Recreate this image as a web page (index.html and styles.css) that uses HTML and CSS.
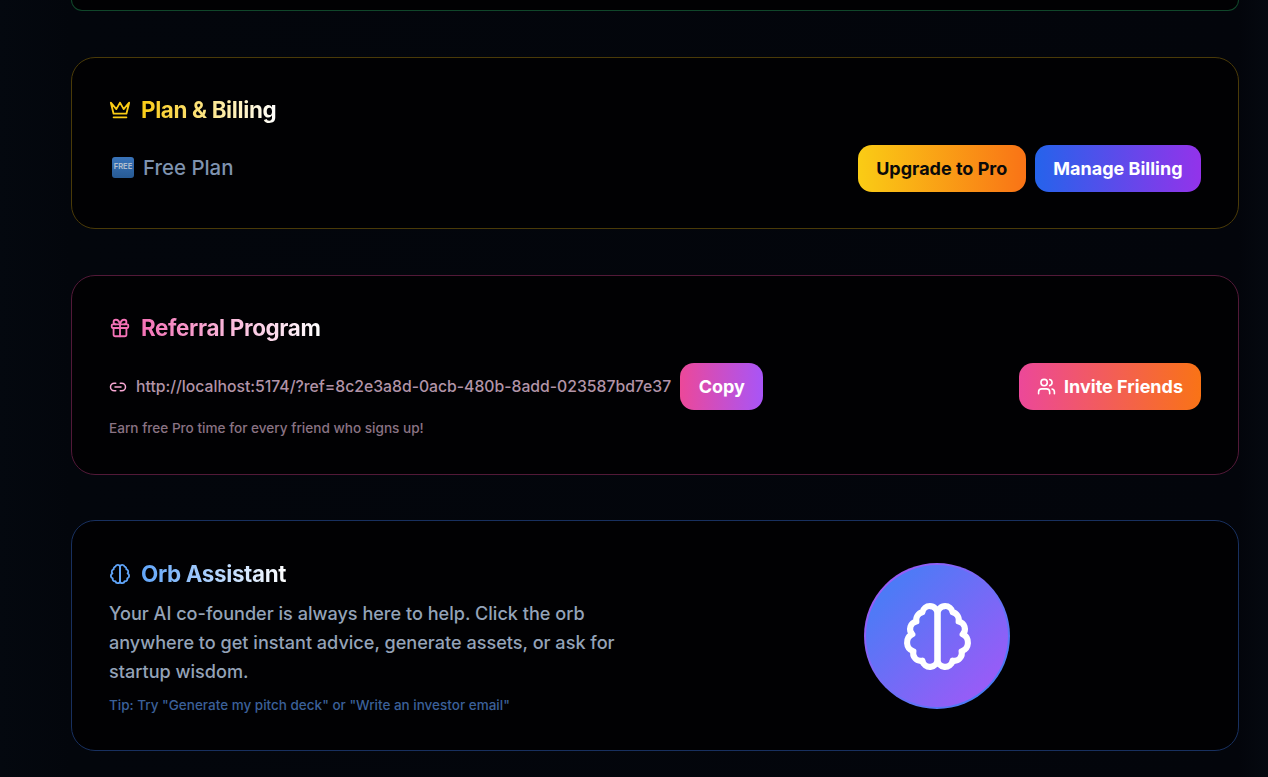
FILE: index.html
```html
<!DOCTYPE html>
<html lang="en">
<head>
<meta charset="utf-8">
<title>Settings</title>
<link rel="stylesheet" href="styles.css">
</head>
<body>
<main class="page">
  <div class="card-stub"></div>

  <section class="card card-plan">
    <h2 class="title">
      <svg class="icon icon-title stroke-yellow" viewBox="0 0 24 24"><path d="m2 4 3 12h14l3-12-6 7-4-7-4 7-6-7zm3 16h14"/></svg>
      <span class="grad grad-yellow">Plan &amp; Billing</span>
    </h2>
    <div class="row">
      <div class="plan-name"><span class="free-badge"><span class="free-text">FREE</span></span><span>Free Plan</span></div>
      <div class="btn-group">
        <button class="btn btn-upgrade">Upgrade to Pro</button>
        <button class="btn btn-manage">Manage Billing</button>
      </div>
    </div>
  </section>

  <section class="card card-ref">
    <h2 class="title">
      <svg class="icon icon-title stroke-pink" viewBox="0 0 24 24"><rect x="3" y="8" width="18" height="4" rx="1"/><path d="M12 8v13"/><path d="M19 12v7a2 2 0 0 1-2 2H7a2 2 0 0 1-2-2v-7"/><path d="M7.5 8a2.5 2.5 0 0 1 0-5A4.8 8 0 0 1 12 8a4.8 8 0 0 1 4.5-5 2.5 2.5 0 0 1 0 5"/></svg>
      <span class="grad grad-pink">Referral Program</span>
    </h2>
    <div class="row">
      <div class="ref-link">
        <svg class="icon icon-link" viewBox="0 0 24 24"><path d="M9 17H7A5 5 0 0 1 7 7h2"/><path d="M15 7h2a5 5 0 1 1 0 10h-2"/><line x1="8" y1="12" x2="16" y2="12"/></svg>
        <span class="ref-url">http://localhost:5174/?ref=8c2e3a8d-0acb-480b-8add-023587bd7e37</span>
        <button class="btn btn-copy">Copy</button>
      </div>
      <button class="btn btn-invite">
        <svg class="icon icon-users" viewBox="0 0 24 24"><path d="M16 21v-2a4 4 0 0 0-4-4H6a4 4 0 0 0-4 4v2"/><circle cx="9" cy="7" r="4"/><path d="M22 21v-2a4 4 0 0 0-3-3.87"/><path d="M16 3.13a4 4 0 0 1 0 7.75"/></svg>
        Invite Friends
      </button>
    </div>
    <p class="hint">Earn free Pro time for every friend who signs up!</p>
  </section>

  <section class="card card-orb">
    <div class="orb-grid">
      <div>
        <h2 class="title title-orb">
          <svg class="icon icon-title stroke-blue" viewBox="0 0 24 24"><path d="M9.5 2A2.5 2.5 0 0 1 12 4.5v15a2.5 2.5 0 0 1-4.96.44 2.5 2.5 0 0 1-2.96-3.08 3 3 0 0 1-.34-5.58 2.5 2.5 0 0 1 1.32-4.24 2.5 2.5 0 0 1 1.98-3A2.5 2.5 0 0 1 9.5 2Z"/><path d="M14.5 2A2.5 2.5 0 0 0 12 4.5v15a2.5 2.5 0 0 0 4.96.44 2.5 2.5 0 0 0 2.96-3.08 3 3 0 0 0 .34-5.58 2.5 2.5 0 0 0-1.32-4.24 2.5 2.5 0 0 0-1.98-3A2.5 2.5 0 0 0 14.5 2Z"/></svg>
          <span class="grad grad-blue">Orb Assistant</span>
        </h2>
        <p class="orb-desc">Your AI co-founder is always here to help. Click the orb anywhere to get instant advice, generate assets, or ask for startup wisdom.</p>
        <p class="orb-tip">Tip: Try "Generate my pitch deck" or "Write an investor email"</p>
      </div>
      <div class="orb-wrap">
        <div class="orb">
          <svg class="icon icon-orb" viewBox="0 0 24 24"><path d="M9.5 2A2.5 2.5 0 0 1 12 4.5v15a2.5 2.5 0 0 1-4.96.44 2.5 2.5 0 0 1-2.96-3.08 3 3 0 0 1-.34-5.58 2.5 2.5 0 0 1 1.32-4.24 2.5 2.5 0 0 1 1.98-3A2.5 2.5 0 0 1 9.5 2Z"/><path d="M14.5 2A2.5 2.5 0 0 0 12 4.5v15a2.5 2.5 0 0 0 4.96.44 2.5 2.5 0 0 0 2.96-3.08 3 3 0 0 0 .34-5.58 2.5 2.5 0 0 0-1.32-4.24 2.5 2.5 0 0 0-1.98-3A2.5 2.5 0 0 0 14.5 2Z"/></svg>
        </div>
      </div>
    </div>
  </section>
</main>
</body>
</html>
```
FILE: styles.css
```css
* { box-sizing: border-box; }
html, body { height: 100%; }
body {
  margin: 0;
  overflow: hidden;
  background: linear-gradient(90deg, #04080f 0, #03060c 71px, #03050b 1239px, #050910 100%);
  font-family: Inter, "Liberation Sans", sans-serif;
  color: #fff;
}
.page {
  display: flex;
  flex-direction: column;
  padding: 0 29px 0 71px;
}
.card-stub {
  height: 11px;
  margin-bottom: 46px;
  border: 1px solid #10462a;
  border-top: 0;
  border-radius: 0 0 24px 24px;
  background: #010103;
}
.card {
  border: 1px solid;
  border-radius: 24px;
  padding: 36px 37px;
  background: #010103;
  margin-bottom: 46px;
}
.card-plan { border-color: #4a3a08; }
.card-ref { border-color: #521938; margin-bottom: 45px; }
.card-orb { border-color: #18305f; padding: 37px 37px 35px; }
.title {
  display: flex;
  align-items: center;
  gap: 10px;
  margin: 0 0 19px;
  height: 32px;
  font-size: 22.4px;
  line-height: 32px;
  font-weight: 700;
  letter-spacing: -0.016em;
}
.title-orb { margin-bottom: 9px; }
.grad {
  background-clip: text;
  -webkit-background-clip: text;
  color: transparent;
}
.grad-yellow { background-image: linear-gradient(90deg, #facc15, #fff); }
.grad-pink { background-image: linear-gradient(90deg, #f472b6, #fff); }
.grad-blue { background-image: linear-gradient(90deg, #60a5fa, #fff); }
.icon {
  display: block;
  flex: none;
  fill: none;
  stroke: currentColor;
  stroke-width: 2;
  stroke-linecap: round;
  stroke-linejoin: round;
}
.icon-title { width: 22px; height: 22px; }
.stroke-yellow { color: #facc15; }
.stroke-pink { color: #f472b6; }
.stroke-blue { color: #60a5fa; }
.row {
  display: flex;
  align-items: center;
  justify-content: space-between;
}
.plan-name {
  display: flex;
  align-items: center;
  gap: 9px;
  font-size: 20.4px;
  font-weight: 500;
  color: #7f93b0;
  padding-left: 3px;
  margin-top: -3px;
}
.free-badge {
  display: flex;
  align-items: center;
  justify-content: center;
  width: 22px;
  height: 21px;
  border-radius: 3px;
  background: linear-gradient(180deg, #3a74ba, #275a94);
}
.free-text {
  font-size: 7.5px;
  font-weight: 700;
  line-height: 1;
  color: #aebccd;
}
.btn-group { display: flex; gap: 9px; }
.btn {
  display: inline-flex;
  align-items: center;
  justify-content: center;
  height: 47px;
  padding: 0 18.5px;
  border: 0;
  border-radius: 14px;
  font-family: inherit;
  font-size: 18px;
  font-weight: 700;
  color: #fff;
}
.btn-upgrade { background: linear-gradient(90deg, #facc15, #f97316); color: #0a0a0a; }
.btn-manage { background: linear-gradient(90deg, #2563eb, #9333ea); }
.btn-copy { background: linear-gradient(90deg, #ec4899, #a855f7); }
.btn-invite { gap: 8px; padding: 0 18px; background: linear-gradient(90deg, #ec4899, #f97316); }
.icon-users { width: 19px; height: 19px; }
.ref-link {
  display: flex;
  align-items: center;
  font-size: 15.74px;
  font-weight: 500;
  color: #b294a8;
}
.icon-link { width: 18px; height: 18px; color: #f9a8d4; margin-right: 9px; }
.ref-url { margin-right: 9px; }
.hint {
  margin: 8px 0 0;
  font-size: 13.6px;
  line-height: 20px;
  font-weight: 500;
  color: #8a7383;
}
.orb-grid {
  display: grid;
  grid-template-columns: 1fr 1fr;
  gap: 36px;
  align-items: center;
}
.orb-desc {
  margin: 0;
  font-size: 18.08px;
  line-height: 29px;
  font-weight: 500;
  color: #94a3b8;
}
.orb-tip {
  margin: 9px 0 0;
  font-size: 13.5px;
  line-height: 20px;
  font-weight: 500;
  color: #3b6099;
}
.orb-wrap { display: flex; justify-content: center; padding-bottom: 1px; }
.orb {
  display: flex;
  align-items: center;
  justify-content: center;
  width: 146px;
  height: 146px;
  border-radius: 50%;
  border: 2px solid transparent;
  background:
    linear-gradient(135deg, #3b82f6, #a855f7) padding-box,
    linear-gradient(315deg, #3b82f6, #a855f7) border-box;
}
.icon-orb { width: 73px; height: 73px; color: #fff; }
```
